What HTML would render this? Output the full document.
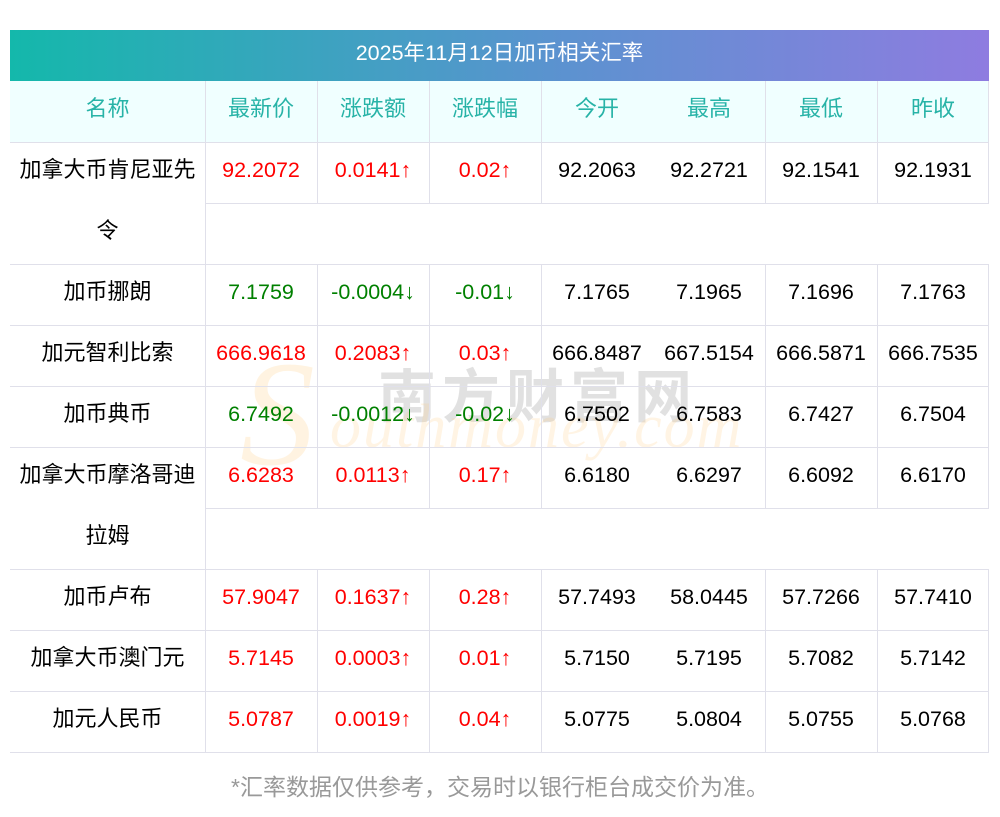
<!DOCTYPE html>
<html><head><meta charset="utf-8"><style>
body{margin:0;width:1000px;height:817px;background:#fff;position:relative;overflow:hidden;font-family:"Liberation Sans","Noto Sans CJK SC",sans-serif}
.t{position:absolute;left:10px;top:30px;width:979px;height:51px;background:linear-gradient(90deg,#14b8ab,#5a93cf 55%,#8e7ce0);color:#fff;font-size:21.5px;line-height:47px;text-align:center}
.hd{position:absolute;left:10px;top:81px;width:979px;height:61px;background:#f0ffff}
.c{position:absolute;height:61px;line-height:56px;text-align:center;font-size:21.5px;color:#000;white-space:nowrap}
.n{font-size:22px}
.h{color:#27b3a7;font-size:22px}
.r{color:#f00}.g{color:#008000}
.hl{position:absolute;height:1px;background:#e0e0ea}
.vl{position:absolute;width:1px;background:#e0e0ea}
.wm1{position:absolute;left:378px;top:350px;font-size:58px;color:rgba(120,120,120,.22);letter-spacing:6px;font-weight:bold}
.wm2{position:absolute;left:330px;top:392px;font-size:62px;font-style:italic;font-family:"Liberation Serif",serif;color:rgba(255,200,120,.2);letter-spacing:2px}
.wmS{position:absolute;left:240px;top:328px;font-size:150px;font-style:italic;font-family:"Liberation Serif",serif;color:rgba(255,200,120,.22)}
.ft{position:absolute;left:0;width:1000px;top:768px;text-align:center;color:#999;font-size:23px}
</style></head><body>
<div class="t">2025年11月12日加币相关汇率</div>
<div class="hd"></div>
<div class="wmS">S</div>
<div class="wm1">南方财富网</div>
<div class="wm2">outhmoney.com</div>

<div class="hl" style="left:10px;width:979px;top:142px"></div>
<div class="hl" style="left:205px;width:784px;top:203px"></div>
<div class="hl" style="left:10px;width:979px;top:264px"></div>
<div class="hl" style="left:10px;width:979px;top:325px"></div>
<div class="hl" style="left:10px;width:979px;top:386px"></div>
<div class="hl" style="left:10px;width:979px;top:447px"></div>
<div class="hl" style="left:205px;width:784px;top:508px"></div>
<div class="hl" style="left:10px;width:979px;top:569px"></div>
<div class="hl" style="left:10px;width:979px;top:630px"></div>
<div class="hl" style="left:10px;width:979px;top:691px"></div>
<div class="hl" style="left:10px;width:979px;top:752px"></div>

<div class="vl" style="left:205px;top:81px;height:671px"></div>
<div class="vl" style="left:317px;top:81px;height:122px"></div>
<div class="vl" style="left:429px;top:81px;height:122px"></div>
<div class="vl" style="left:541px;top:81px;height:122px"></div>
<div class="vl" style="left:765px;top:81px;height:122px"></div>
<div class="vl" style="left:877px;top:81px;height:122px"></div>
<div class="vl" style="left:988px;top:81px;height:122px"></div>
<div class="vl" style="left:317px;top:264px;height:244px"></div>
<div class="vl" style="left:429px;top:264px;height:244px"></div>
<div class="vl" style="left:541px;top:264px;height:244px"></div>
<div class="vl" style="left:765px;top:264px;height:244px"></div>
<div class="vl" style="left:877px;top:264px;height:244px"></div>
<div class="vl" style="left:988px;top:264px;height:244px"></div>
<div class="vl" style="left:317px;top:569px;height:183px"></div>
<div class="vl" style="left:429px;top:569px;height:183px"></div>
<div class="vl" style="left:541px;top:569px;height:183px"></div>
<div class="vl" style="left:765px;top:569px;height:183px"></div>
<div class="vl" style="left:877px;top:569px;height:183px"></div>
<div class="vl" style="left:988px;top:569px;height:183px"></div>

<div class="c h" style="left:10px;width:195px;top:81px">名称</div>
<div class="c h" style="left:205px;width:112px;top:81px">最新价</div>
<div class="c h" style="left:317px;width:112px;top:81px">涨跌额</div>
<div class="c h" style="left:429px;width:112px;top:81px">涨跌幅</div>
<div class="c h" style="left:541px;width:112px;top:81px">今开</div>
<div class="c h" style="left:653px;width:112px;top:81px">最高</div>
<div class="c h" style="left:765px;width:112px;top:81px">最低</div>
<div class="c h" style="left:877px;width:112px;top:81px">昨收</div>

<div class="c n" style="left:10px;width:195px;top:142px">加拿大币肯尼亚先</div>
<div class="c n" style="left:10px;width:195px;top:203px">令</div>
<div class="c r" style="left:205px;width:112px;top:142px">92.2072</div>
<div class="c r" style="left:317px;width:112px;top:142px">0.0141↑</div>
<div class="c r" style="left:429px;width:112px;top:142px">0.02↑</div>
<div class="c" style="left:541px;width:112px;top:142px">92.2063</div>
<div class="c" style="left:653px;width:112px;top:142px">92.2721</div>
<div class="c" style="left:765px;width:112px;top:142px">92.1541</div>
<div class="c" style="left:877px;width:112px;top:142px">92.1931</div>

<div class="c n" style="left:10px;width:195px;top:264px">加币挪朗</div>
<div class="c g" style="left:205px;width:112px;top:264px">7.1759</div>
<div class="c g" style="left:317px;width:112px;top:264px">-0.0004↓</div>
<div class="c g" style="left:429px;width:112px;top:264px">-0.01↓</div>
<div class="c" style="left:541px;width:112px;top:264px">7.1765</div>
<div class="c" style="left:653px;width:112px;top:264px">7.1965</div>
<div class="c" style="left:765px;width:112px;top:264px">7.1696</div>
<div class="c" style="left:877px;width:112px;top:264px">7.1763</div>

<div class="c n" style="left:10px;width:195px;top:325px">加元智利比索</div>
<div class="c r" style="left:205px;width:112px;top:325px">666.9618</div>
<div class="c r" style="left:317px;width:112px;top:325px">0.2083↑</div>
<div class="c r" style="left:429px;width:112px;top:325px">0.03↑</div>
<div class="c" style="left:541px;width:112px;top:325px">666.8487</div>
<div class="c" style="left:653px;width:112px;top:325px">667.5154</div>
<div class="c" style="left:765px;width:112px;top:325px">666.5871</div>
<div class="c" style="left:877px;width:112px;top:325px">666.7535</div>

<div class="c n" style="left:10px;width:195px;top:386px">加币典币</div>
<div class="c g" style="left:205px;width:112px;top:386px">6.7492</div>
<div class="c g" style="left:317px;width:112px;top:386px">-0.0012↓</div>
<div class="c g" style="left:429px;width:112px;top:386px">-0.02↓</div>
<div class="c" style="left:541px;width:112px;top:386px">6.7502</div>
<div class="c" style="left:653px;width:112px;top:386px">6.7583</div>
<div class="c" style="left:765px;width:112px;top:386px">6.7427</div>
<div class="c" style="left:877px;width:112px;top:386px">6.7504</div>

<div class="c n" style="left:10px;width:195px;top:447px">加拿大币摩洛哥迪</div>
<div class="c n" style="left:10px;width:195px;top:508px">拉姆</div>
<div class="c r" style="left:205px;width:112px;top:447px">6.6283</div>
<div class="c r" style="left:317px;width:112px;top:447px">0.0113↑</div>
<div class="c r" style="left:429px;width:112px;top:447px">0.17↑</div>
<div class="c" style="left:541px;width:112px;top:447px">6.6180</div>
<div class="c" style="left:653px;width:112px;top:447px">6.6297</div>
<div class="c" style="left:765px;width:112px;top:447px">6.6092</div>
<div class="c" style="left:877px;width:112px;top:447px">6.6170</div>

<div class="c n" style="left:10px;width:195px;top:569px">加币卢布</div>
<div class="c r" style="left:205px;width:112px;top:569px">57.9047</div>
<div class="c r" style="left:317px;width:112px;top:569px">0.1637↑</div>
<div class="c r" style="left:429px;width:112px;top:569px">0.28↑</div>
<div class="c" style="left:541px;width:112px;top:569px">57.7493</div>
<div class="c" style="left:653px;width:112px;top:569px">58.0445</div>
<div class="c" style="left:765px;width:112px;top:569px">57.7266</div>
<div class="c" style="left:877px;width:112px;top:569px">57.7410</div>

<div class="c n" style="left:10px;width:195px;top:630px">加拿大币澳门元</div>
<div class="c r" style="left:205px;width:112px;top:630px">5.7145</div>
<div class="c r" style="left:317px;width:112px;top:630px">0.0003↑</div>
<div class="c r" style="left:429px;width:112px;top:630px">0.01↑</div>
<div class="c" style="left:541px;width:112px;top:630px">5.7150</div>
<div class="c" style="left:653px;width:112px;top:630px">5.7195</div>
<div class="c" style="left:765px;width:112px;top:630px">5.7082</div>
<div class="c" style="left:877px;width:112px;top:630px">5.7142</div>

<div class="c n" style="left:10px;width:195px;top:691px">加元人民币</div>
<div class="c r" style="left:205px;width:112px;top:691px">5.0787</div>
<div class="c r" style="left:317px;width:112px;top:691px">0.0019↑</div>
<div class="c r" style="left:429px;width:112px;top:691px">0.04↑</div>
<div class="c" style="left:541px;width:112px;top:691px">5.0775</div>
<div class="c" style="left:653px;width:112px;top:691px">5.0804</div>
<div class="c" style="left:765px;width:112px;top:691px">5.0755</div>
<div class="c" style="left:877px;width:112px;top:691px">5.0768</div>

<div class="ft">*汇率数据仅供参考，交易时以银行柜台成交价为准。</div>
</body></html>
